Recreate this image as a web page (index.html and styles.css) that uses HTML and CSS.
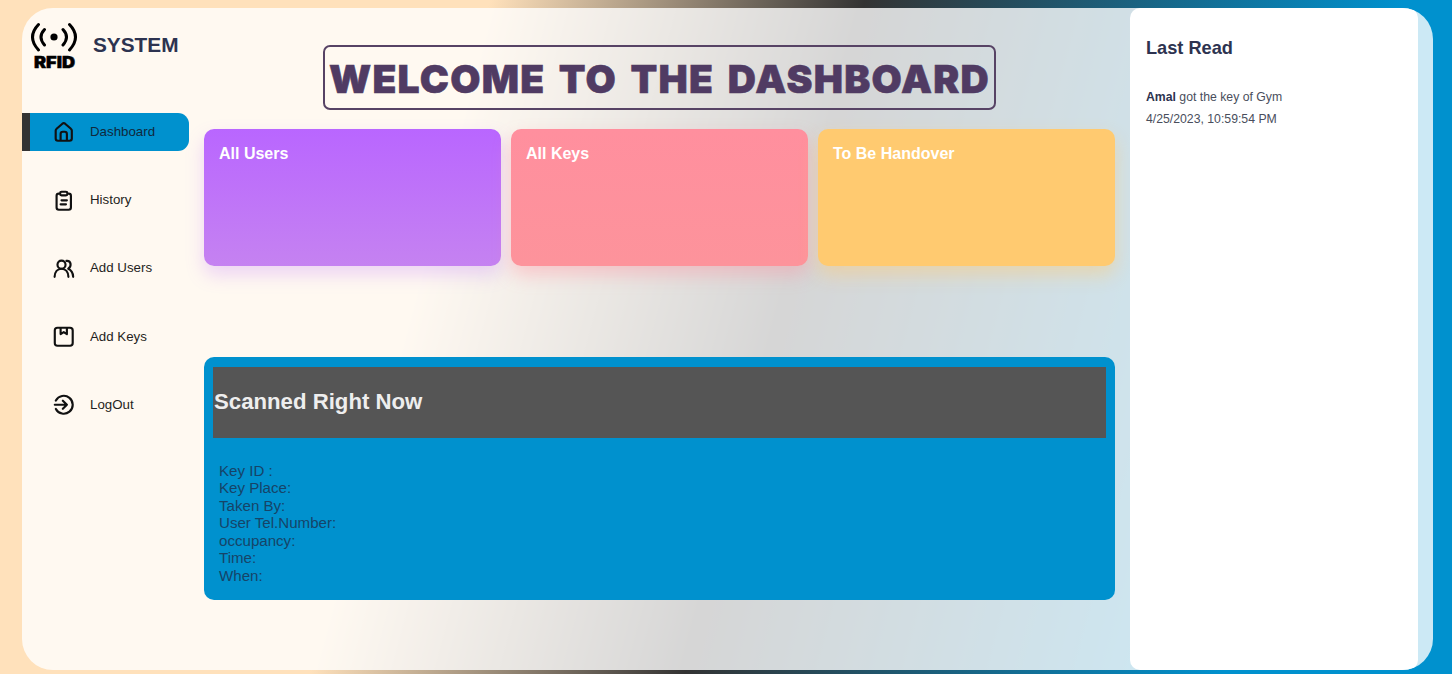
FILE: index.html
```html
<!DOCTYPE html>
<html lang="en">
<head>
<meta charset="utf-8">
<title>RFID System</title>
<link rel="stylesheet" href="styles.css">
</head>
<body>
<div class="container">
  <aside class="sidebar">
    <div class="brand">
      <svg class="logo" viewBox="0 0 50 50">
        <g fill="none" stroke="#000" stroke-width="3" stroke-linecap="round">
          <path d="M8.500 3.500Q-3.500 16 8.500 29M14.500 8.500Q7.500 16 14.500 24M39.500 3.500Q51.500 16 39.500 29M33 8.500Q40 16 33 24"/>
        </g>
        <circle cx="24" cy="16" r="3.600"/>
        <text class="logo-text" x="4" y="47" textLength="41" lengthAdjust="spacingAndGlyphs">RFID</text>
      </svg>
      <span class="brand-name">SYSTEM</span>
    </div>
    <nav class="menu">
      <a class="item active">
        <svg class="icon" viewBox="0 0 24 24"><path d="M3 10.500Q3 9.500 4 8.700L10.500 3Q12 1.800 13.500 3L20 8.700Q21 9.500 21 10.500V19.500Q21 22 18.500 22H5.500Q3 22 3 19.500ZM8.500 22V14.500Q8.500 12 11 12H13Q15.500 12 15.500 14.500V22"/></svg>
        <span>Dashboard</span>
      </a>
      <a class="item">
        <svg class="icon" viewBox="0 0 24 24"><path d="M8 4H6.500Q4 4 4 6.500V19.500Q4 22 6.500 22H17.500Q20 22 20 19.500V6.500Q20 4 17.500 4H16M9.500 2H14.500Q16 2 16 3.500V4.500Q16 6 14.500 6H9.500Q8 6 8 4.500V3.500Q8 2 9.500 2ZM9.500 11.500H15.500M8.500 16H14.500"/></svg>
        <span>History</span>
      </a>
      <a class="item">
        <svg class="icon" viewBox="0 0 24 24"><circle cx="9.500" cy="7.500" r="4.500"/><path d="M1.800 21C2 15.500 5 12 9.500 12S17 15.500 17.200 21M15 3.200C20.500 2.600 21 9.500 17 12C20.500 13.500 22.300 16.500 22.500 21"/></svg>
        <span>Add Users</span>
      </a>
      <a class="item">
        <svg class="icon" viewBox="0 0 24 24"><path d="M5 2H19Q22 2 22 5V19Q22 22 19 22H5Q2 22 2 19V5Q2 2 5 2ZM8.500 2V9L12 6.800L15.500 9V2"/></svg>
        <span>Add Keys</span>
      </a>
      <a class="item">
        <svg class="icon" viewBox="0 0 24 24"><path d="M3.200 7.300A10 10 0 1 1 3.200 16.700M2 12H15.500M11 7.500L15.500 12L11 16.500"/></svg>
        <span>LogOut</span>
      </a>
    </nav>
  </aside>
  <main class="main">
    <h1 class="title">WELCOME TO THE DASHBOARD</h1>
    <div class="cards">
      <div class="card users">All Users</div>
      <div class="card keys">All Keys</div>
      <div class="card handover">To Be Handover</div>
    </div>
    <section class="scan">
      <h2 class="scan-title">Scanned Right Now</h2>
      <div class="details">
        <div>Key ID :</div>
        <div>Key Place:</div>
        <div>Taken By:</div>
        <div>User Tel.Number:</div>
        <div>occupancy:</div>
        <div>Time:</div>
        <div>When:</div>
      </div>
    </section>
  </main>
  <aside class="last">
    <h2 class="last-title">Last Read</h2>
    <p class="entry"><b>Amal</b> got the key of Gym<br>4/25/2023, 10:59:54 PM</p>
  </aside>
</div>
</body>
</html>
```
FILE: styles.css
```css
* { box-sizing: border-box; }
body {
  margin: 0;
  height: 674px;
  padding: 8px 19px 4px 22px;
  overflow: hidden;
  font-family: "Liberation Sans", Arial, sans-serif;
  background: linear-gradient(105deg, #ffe1bb 30%, #333 53%, #0091ce 86%);
}
.container {
  display: flex;
  height: 662px;
  border-radius: 31px;
  overflow: hidden;
  background: rgba(255, 255, 255, .8);
  padding-right: 15px;
}
.sidebar { width: 182px; flex: none; }
.brand { display: flex; height: 105px; padding: 13px 0 0 8px; }
.logo { width: 50px; height: 50px; }
.logo-text { font: 900 16px Inter, sans-serif; stroke: #000; stroke-width: .5px; }
.brand-name { margin-left: 13px; font-weight: bold; font-size: 20.800px; line-height: 47px; color: #2d3350; }
.menu { display: flex; flex-direction: column; gap: 30px; }
.item {
  display: flex;
  align-items: center;
  gap: 15.500px;
  width: 167px;
  height: 38.200px;
  padding-left: 31px;
  font-size: 13.300px;
  color: #1f1f22;
}
.item span { margin-bottom: 1px; }
.active { background: #0091ce; border-left: 8px solid #333; border-radius: 0 11px 11px 0; padding-left: 23px; color: #10283c; }
.icon { width: 21.500px; height: 21.500px; fill: none; stroke: #111; stroke-width: 2.400; stroke-linecap: round; stroke-linejoin: round; }
.main { width: 911px; flex: none; padding-top: 37px; }
.title {
  width: 673px;
  height: 65px;
  margin: 0 0 19px 119px;
  border: 2px solid #574365;
  border-radius: 7px;
  font: 900 39px/64px Inter, sans-serif;
  letter-spacing: 1.250px;
  word-spacing: 4.500px;
  -webkit-text-stroke: .6px #503b63;
  text-align: center;
  white-space: nowrap;
  color: #503b63;
}
.cards { display: grid; grid-template-columns: repeat(3, 297px); gap: 10px; }
.card { height: 137px; border-radius: 10px; padding: 15px; font-size: 16px; line-height: 19px; font-weight: bold; color: #fff; }
.users { background: linear-gradient(#b966ff, #c582f1); box-shadow: 0 9px 18px rgba(185, 102, 255, .25); }
.keys { background: linear-gradient(#ff8f9e, #fd939b); box-shadow: 0 9px 18px rgba(255, 143, 158, .4); }
.handover { background: #ffca70; box-shadow: 0 9px 18px rgba(255, 202, 112, .45); }
.scan { height: 242.500px; margin-top: 91px; padding: 9.500px 9px; border-radius: 10px; background: #0091ce; }
.scan-title { height: 71px; margin: 0; padding-left: 1px; font-size: 22.200px; line-height: 70px; color: #eee; background: #555; }
.details { padding: 24px 6px; font-size: 15.100px; line-height: 17.500px; color: #164468; }
.last { margin-left: 15px; width: 288px; flex: none; background: #fff; border-radius: 10px; padding: 29px 16px; color: #2d3350; }
.last-title { margin: 0; font-size: 18.200px; line-height: 23px; }
.entry { margin: 26px 0 0; font-size: 12.250px; line-height: 22px; color: #494e5c; }
.entry b { color: #2d3350; }
```
